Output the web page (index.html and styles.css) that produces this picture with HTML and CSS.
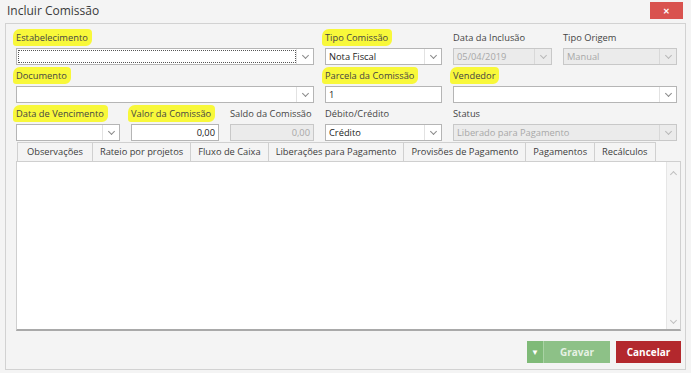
FILE: index.html
```html
<!doctype html>
<html lang="pt-BR">
  <head>
    <meta charset="UTF-8" />
    <title>Incluir Comissão</title>
    <link rel="stylesheet" href="styles.css">
  </head>
  <body>
    <div class="window">
      <div class="titlebar">
        <span class="title">Incluir Comissão</span>
        <span class="close">&#x2715;</span>
      </div>

      <div class="panel">
        <div class="form-grid">
          <div class="field span3">
            <label><span class="hl">Estabelecimento</span></label>
            <div class="input select focused"><span class="val"></span><span class="drop"></span></div>
          </div>
          <div class="field">
            <label><span class="hl">Tipo Comissão</span></label>
            <div class="input select"><span class="val">Nota Fiscal</span><span class="drop"></span></div>
          </div>
          <div class="field">
            <label>Data da Inclusão</label>
            <div class="input select disabled"><span class="val">05/04/2019</span><span class="drop"></span></div>
          </div>
          <div class="field last">
            <label>Tipo Origem</label>
            <div class="input select disabled"><span class="val">Manual</span><span class="drop"></span></div>
          </div>

          <div class="field span3">
            <label><span class="hl">Documento</span></label>
            <div class="input select"><span class="val"></span><span class="drop"></span></div>
          </div>
          <div class="field">
            <label><span class="hl">Parcela da Comissão</span></label>
            <div class="input"><span class="val">1</span></div>
          </div>
          <div class="field span2 last">
            <label><span class="hl">Vendedor</span></label>
            <div class="input select"><span class="val"></span><span class="drop"></span></div>
          </div>

          <div class="field">
            <label><span class="hl">Data de Vencimento</span></label>
            <div class="input select"><span class="val"></span><span class="drop"></span></div>
          </div>
          <div class="field">
            <label><span class="hl">Valor da Comissão</span></label>
            <div class="input num"><span class="val">0,00</span></div>
          </div>
          <div class="field">
            <label>Saldo da Comissão</label>
            <div class="input num disabled"><span class="val">0,00</span></div>
          </div>
          <div class="field">
            <label>Débito/Crédito</label>
            <div class="input select"><span class="val">Crédito</span><span class="drop"></span></div>
          </div>
          <div class="field span2 last">
            <label>Status</label>
            <div class="input select disabled"><span class="val">Liberado para Pagamento</span><span class="drop"></span></div>
          </div>
        </div>

        <div class="tabs">
          <span class="tab active">Observações</span>
          <span class="tab">Rateio por projetos</span>
          <span class="tab">Fluxo de Caixa</span>
          <span class="tab">Liberações para Pagamento</span>
          <span class="tab">Provisões de Pagamento</span>
          <span class="tab">Pagamentos</span>
          <span class="tab">Recálculos</span>
        </div>
        <div class="tab-body">
          <div class="scrollbar">
            <span class="chev up"></span>
            <span class="chev down"></span>
          </div>
        </div>

        <div class="actions">
          <div class="btn-group">
            <span class="btn save-drop">&#x25BC;</span>
            <span class="btn save">Gravar</span>
          </div>
          <span class="btn cancel">Cancelar</span>
        </div>
      </div>
    </div>
  </body>
</html>
```

FILE: styles.css
```css
html, body {
  margin: 0;
  height: 100%;
}

body {
  font-family: "Open Sans", "Noto Sans", sans-serif;
  font-size: 9.3px;
  color: #333;
  background: #f4f4f4;
}

.window {
  padding: 0 5px 3px 5px;
  height: 100%;
  box-sizing: border-box;
  display: flex;
  flex-direction: column;
}

.titlebar {
  height: 23px;
  display: flex;
  align-items: center;
  justify-content: space-between;
  padding: 0 3px 0 2px;
}

.title {
  font-size: 12px;
  color: #3a3a3a;
  margin-top: -2px;
}

.close {
  width: 33px;
  height: 17px;
  margin-top: -3px;
  background: #d9534f;
  color: #fff;
  font-size: 8px;
  font-weight: bold;
  display: flex;
  align-items: center;
  justify-content: center;
}

.panel {
  flex: 1;
  border: 1px solid #d2d2d2;
  background: #f4f4f4;
  padding: 6px 4px 0 10px;
  display: flex;
  flex-direction: column;
}

.form-grid {
  display: grid;
  grid-template-columns: 115px 99px 95px 128px 110px 114px;
  row-gap: 3px;
}

.field {
  padding-right: 11px;
}
.field.last {
  padding-right: 0;
}
.span2 { grid-column: span 2; }
.span3 { grid-column: span 3; }

label {
  display: block;
  height: 15px;
  line-height: 15px;
  margin-bottom: 3px;
  white-space: nowrap;
  color: #444;
}

.hl {
  background: #f8f83a;
  border-radius: 7px 4px 6px 3px;
  padding: 2px 4px 2px 3px;
  margin-left: -3px;
}

.input {
  height: 17px;
  border: 1px solid #b5b5b5;
  background: #fff;
  box-sizing: border-box;
  display: flex;
  align-items: stretch;
}

.input .val {
  flex: 1;
  line-height: 15px;
  padding: 0 3px;
  white-space: nowrap;
  overflow: hidden;
  color: #222;
}

.input.num .val {
  text-align: right;
}

.input .drop {
  width: 16px;
  border-left: 1px solid #e2e2e2;
  background: #fff;
  display: flex;
  align-items: center;
  justify-content: center;
}
.input .drop::before {
  content: "";
  width: 4px;
  height: 4px;
  border-right: 1.3px solid #8a8a8a;
  border-bottom: 1.3px solid #8a8a8a;
  transform: rotate(45deg);
  margin-top: -3px;
}

.input.focused .val {
  margin: 1px 0 1px 1px;
  border: 1px dotted #555;
}

.input.disabled {
  border-color: #c8c8c8;
  background: #ebebeb;
}
.input.disabled .val {
  color: #a8a8a8;
}
.input.disabled .drop {
  background: #ebebeb;
  border-left-color: #d8d8d8;
}
.input.disabled .drop::before {
  border-color: #b8b8b8;
}

.tabs {
  display: flex;
  margin-top: 1px;
  padding-left: 1px;
  height: 19px;
}

.tab {
  border: 1px solid #d0d0d0;
  border-left: none;
  border-bottom: none;
  padding: 0 7px;
  line-height: 18px;
  color: #3c3c3c;
  background: #f4f4f4;
  white-space: nowrap;
}
.tab:first-child {
  border-left: 1px solid #d0d0d0;
}
.tab.active {
  padding: 0 9px;
}

.tab-body {
  height: 167px;
  border: 1px solid #cfcfcf;
  border-bottom: 2px solid #a9a9a9;
  background: #fff;
  display: flex;
  justify-content: flex-end;
}

.scrollbar {
  width: 13px;
  border-left: 1px solid #e6e6e6;
  background: #f5f5f5;
  display: flex;
  flex-direction: column;
  justify-content: space-between;
  align-items: center;
  padding: 7px 0 6px;
}
.chev {
  width: 4px;
  height: 4px;
  border-right: 1px solid #c0c0c0;
  border-bottom: 1px solid #c0c0c0;
}
.chev.up {
  transform: rotate(-135deg);
  margin-top: 3px;
}
.chev.down {
  transform: rotate(45deg);
}

.actions {
  display: flex;
  justify-content: flex-end;
  gap: 6px;
  margin-top: 10px;
}

.btn-group {
  display: flex;
}

.btn {
  height: 22px;
  line-height: 22px;
  font-weight: bold;
  font-size: 10px;
  color: #fff;
  text-align: center;
}

.save-drop {
  width: 16px;
  background: #7fba78;
  border-right: 1px solid #a9d3a4;
  font-size: 8px;
}

.save {
  width: 66px;
  background: #8dc187;
  color: #e6f1e4;
}

.cancel {
  width: 65px;
  background: #b3282d;
}
```
